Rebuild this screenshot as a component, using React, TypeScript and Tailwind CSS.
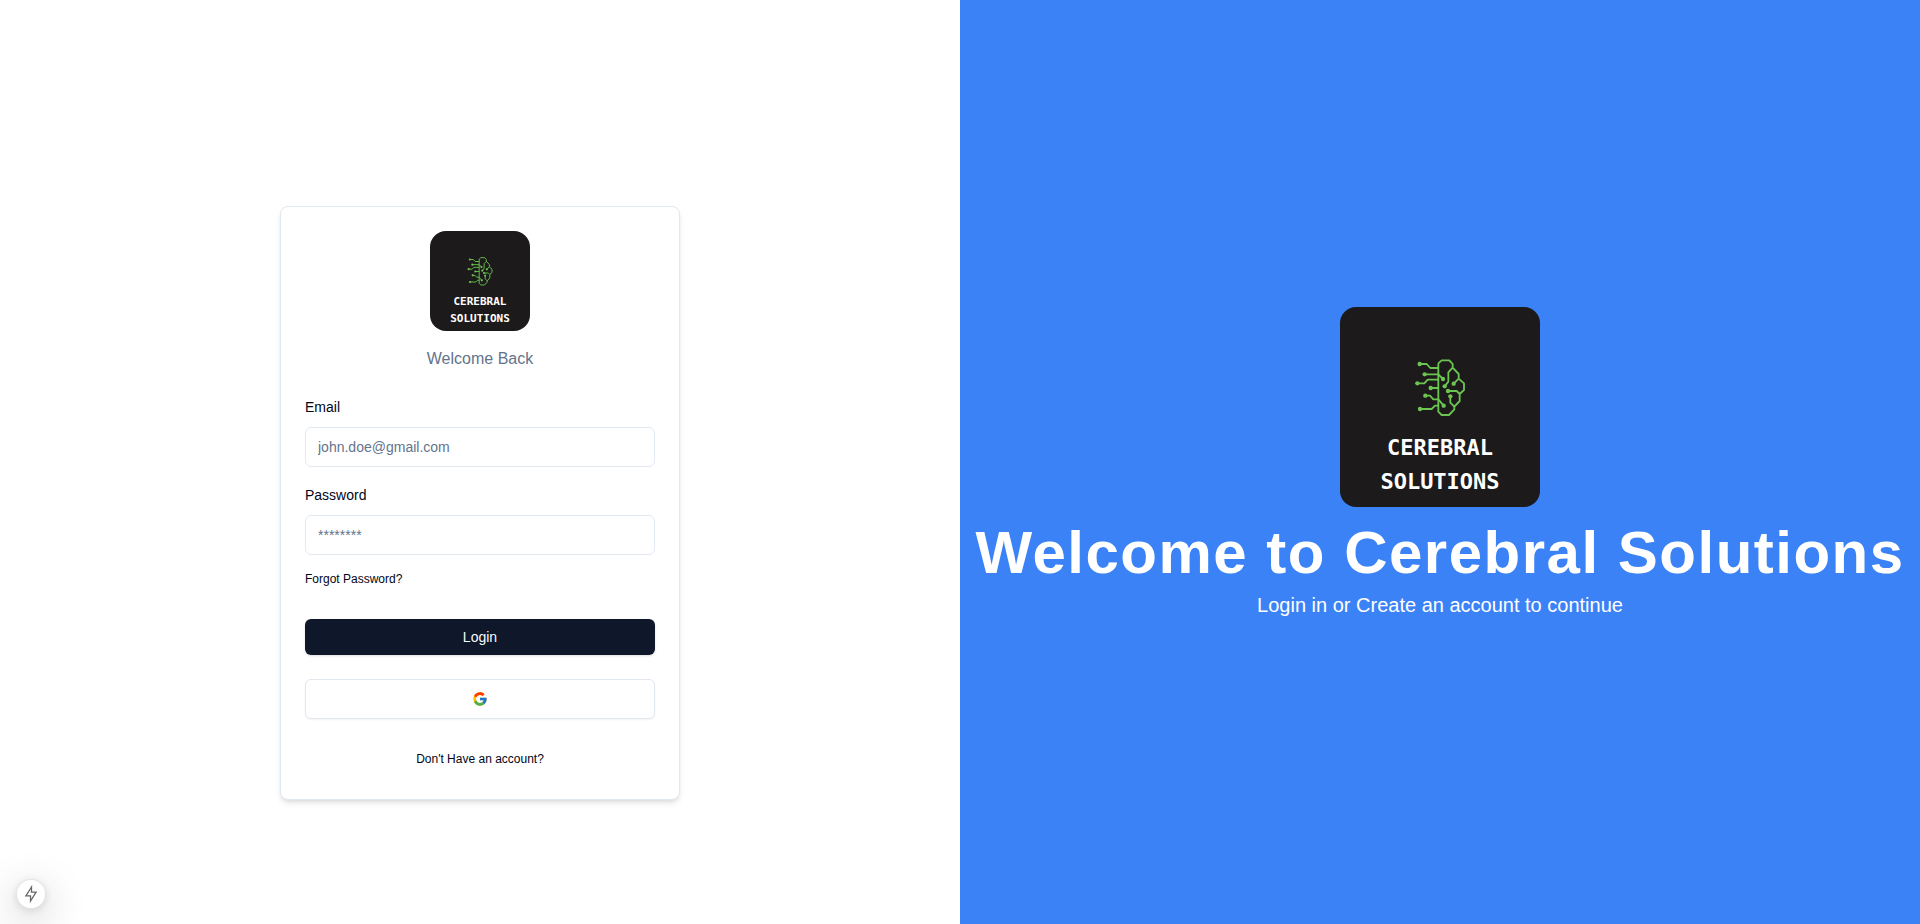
import { FcGoogle } from "react-icons/fc";

const nodes = [
  [269, 192], [284, 223], [262, 250], [302, 264], [286, 287], [270, 327],
  [339, 237], [344, 259], [371, 251], [354, 273], [361, 289], [341, 317],
];

const wordClass = "font-['DejaVu_Sans_Mono',monospace] text-[22px] font-bold";

function Logo({ className }: { className: string }) {
  return (
    <svg viewBox="0 0 200 200" role="img" aria-label="Cerebral Solutions" className={`rounded-2xl bg-[#1c1a1b] ${className}`}>
      <g transform="translate(-10 -7) scale(0.33333)">
        <g fill="none" stroke="#6cc551" strokeWidth="5.500" strokeLinejoin="round">
          <path d="M325 190L335 181H358L368 192V203L355 217V245L344 259M368 203L386 222V236L371 251M386 236L402 250V270L389 282L380 273H354M389 282V303L373 320L361 308V289M373 320V328L357 345H335L325 335V190" />
          <path d="M269 192H290L301 204H325M284 223H325L339 237M262 250H283L293 239H325M302 264H325M286 287H300L310 298H325L341 317M270 327H305L315 317H325" />
        </g>
        {nodes.map(([x, y]) => (
          <circle key={`${x}-${y}`} cx={x} cy={y} r="6.500" fill="#6cc551" />
        ))}
      </g>
      <text x="100" y="148" textAnchor="middle" fill="#fff" className={wordClass}>CEREBRAL</text>
      <text x="100" y="182" textAnchor="middle" fill="#fff" className={wordClass}>SOLUTIONS</text>
    </svg>
  );
}

const inputClass =
  "h-10 w-full rounded-md border border-slate-200 bg-white px-3 py-2 text-sm text-slate-950 placeholder:text-[#64748b]";

export default function App() {
  return (
    <main className="grid min-h-screen grid-cols-2 bg-white font-['Liberation_Sans',Arial,sans-serif] text-slate-950">
      <section className="flex items-center justify-center pt-[82px]">
        <div className="w-[400px] rounded-lg border border-slate-200 bg-white p-6 shadow-md">
          <div className="flex flex-col items-center gap-4 pb-6">
            <Logo className="size-[100px]" />
            <p className="text-base text-[#64748b]">Welcome Back</p>
          </div>
          <form className="flex flex-col gap-6" onSubmit={(e) => e.preventDefault()}>
            <div className="flex flex-col gap-4">
              <div className="flex flex-col gap-2">
                <label htmlFor="email" className="text-sm/6 font-medium">Email</label>
                <input id="email" type="email" placeholder="john.doe@gmail.com" className={inputClass} />
              </div>
              <div className="flex flex-col items-start gap-2">
                <label htmlFor="password" className="text-sm/6 font-medium">Password</label>
                <input id="password" type="password" placeholder="********" className={inputClass} />
                <a href="#forgot" className="flex h-8 items-center text-xs font-medium">Forgot Password?</a>
              </div>
            </div>
            <button type="submit" className="h-9 rounded-md bg-slate-900 text-sm font-medium text-slate-50 shadow-sm">Login</button>
            <button type="button" aria-label="Continue with Google" className="flex h-10 items-center justify-center rounded-md border border-slate-200 bg-white shadow-xs">
              <FcGoogle className="size-4" />
            </button>
            <a href="#register" className="flex h-8 items-center justify-center text-xs font-medium">Don't Have an account?</a>
          </form>
        </div>
      </section>
      <section className="flex flex-col items-center justify-center bg-[#3b82f6] pt-0.5 text-white">
        <Logo className="size-[200px]" />
        <h1 className="mt-4 text-6xl font-bold tracking-wide">Welcome to Cerebral Solutions</h1>
        <p className="mt-2 text-xl">Login in or Create an account to continue</p>
      </section>
      <div className="fixed bottom-[15px] left-4 flex size-[30px] items-center justify-center rounded-full border border-black/10 bg-white shadow-[0_11px_40px_rgba(0,0,0,0.25),0_2px_10px_rgba(0,0,0,0.12)]">
        <svg viewBox="0 0 16 16" className="size-4 overflow-visible" fill="none" stroke="#666" strokeWidth="1.3">
          <path d="M8.500 1L2.900 9.800H7.500V15L13.100 6.200H8.500Z" />
        </svg>
      </div>
    </main>
  );
}
